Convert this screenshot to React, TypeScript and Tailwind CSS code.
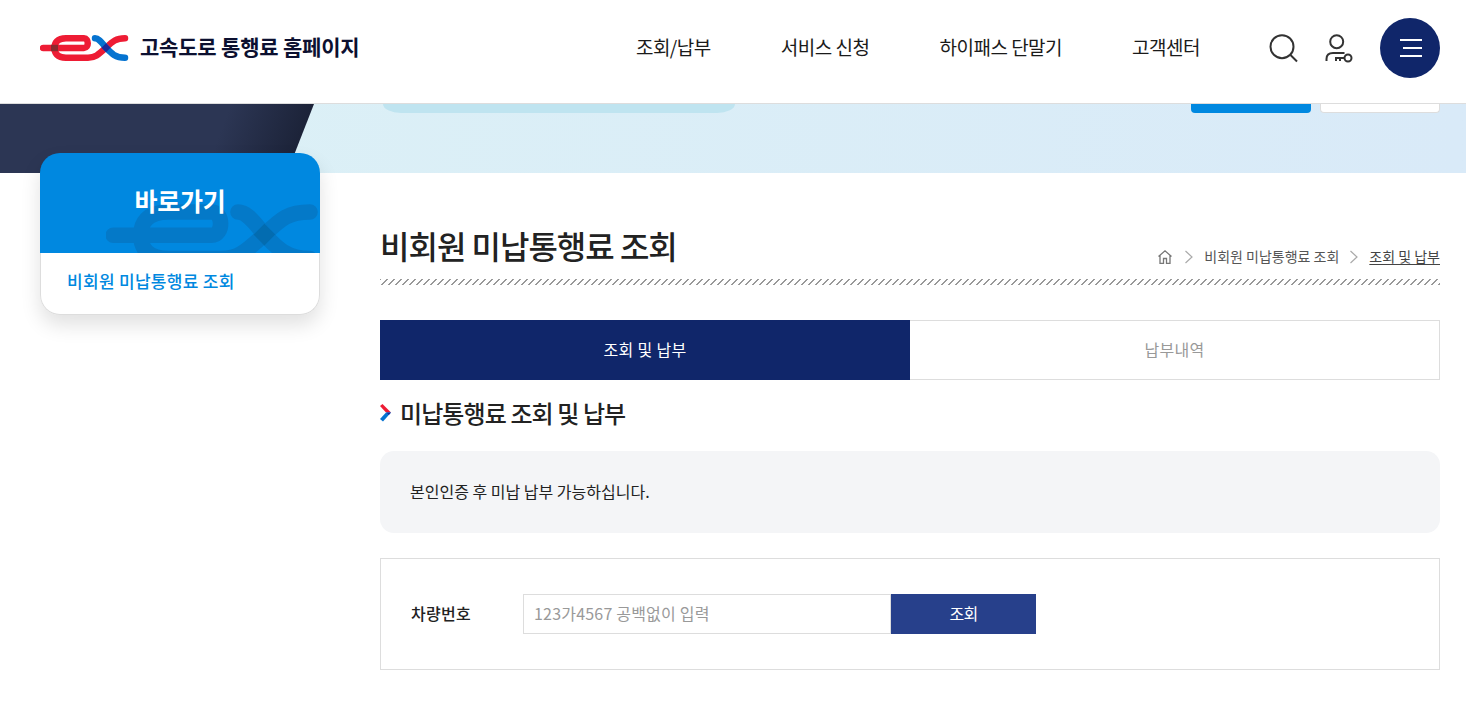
const font = { fontFamily: '"Noto Sans CJK KR", "Noto Sans", sans-serif' };

function ExLogo({ className, mono }: { className?: string; mono?: boolean }) {
  const red = mono ? "#0479c8" : "#ee1c34";
  const blue = mono ? "#0479c8" : "#0573d0";
  return (
    <svg viewBox="0 0 90 27" className={className} fill="none" strokeLinecap="round" strokeWidth="6.5">
      <path d="M3 13H44C49 13 49 3.300 44 3.300H26C17 3.300 14.500 8 14.500 13C14.500 18 17 22.700 26 22.700H48C55 22.700 58 20 66 12.700C73 6 76 3.300 85 3.300" stroke={red} />
      <path d="M55 3.300C59 3.300 62 8 66 12.700C71 18 75 22.700 85 22.700" stroke={blue} />
      <path d="M66 8.200L70.500 12.700L66 17.200L61.500 12.700Z" fill={mono ? "#036cb0" : "#1c2a9a"} />
      {!mono && <path d="M11 9.800H18V16.200H11Z" fill="#8a2a2e" />}
    </svg>
  );
}

function Header() {
  return (
    <header className="h-[104px] bg-white border-b border-[#dddddd] flex items-center pl-10 pr-[26px] pb-[7px]">
      <ExLogo className="w-[90px] h-[27px] mr-[10px]" />
      <span className="text-[21px] font-bold tracking-[-0.2px] text-[#0c1030] -translate-y-px">고속도로 통행료 홈페이지</span>
      <nav className="ml-auto flex items-center gap-[70px] text-[19px] tracking-[-0.5px] text-[#1a1a1a] mr-[69px] -translate-y-px">
        <span>조회/납부</span>
        <span>서비스 신청</span>
        <span>하이패스 단말기</span>
        <span>고객센터</span>
      </nav>
      <svg viewBox="0 0 29 30" className="w-[29px] h-[30px] mr-[27px]" fill="none" stroke="#333333" strokeWidth="2">
        <circle cx="13" cy="13.700" r="11.500" />
        <path d="M21.500 22L28 28.500" />
      </svg>
      <svg viewBox="0 0 28 30" className="w-7 h-[30px] mr-[27px]" fill="none" stroke="#333333" strokeWidth="2">
        <circle cx="11.700" cy="8.700" r="6.500" />
        <path d="M1.500 28V26C1.500 22 4 20 8 20H19.500" />
        <circle cx="23" cy="25" r="3.500" />
        <path d="M19.500 25H11V28M15 25V28" />
      </svg>
      <button className="w-[60px] h-[60px] rounded-full bg-[#10266a] flex flex-col items-end justify-center gap-[6px] pr-[18px]">
        <span className="w-[22px] h-[2px] bg-white" />
        <span className="w-[19px] h-[2px] bg-white" />
        <span className="w-[22px] h-[2px] bg-white" />
      </button>
    </header>
  );
}

function Banner() {
  return (
    <div className="relative h-[69px] bg-gradient-to-r from-[#dcf1f6] to-[#d9eaf8] flex items-start">
      <div className="absolute left-0 top-0 h-full w-[314px] bg-[linear-gradient(110deg,#2c3654_68%,#171d30_100%)] [clip-path:polygon(0_0,100%_0,91.400%_100%,0_100%)]" />
      <div className="ml-[383px] w-[352px] h-[9px] [border-radius:0_0_18px_18px/0_0_9px_9px] bg-[#bfe4f0]" />
      <div className="ml-auto w-[120px] h-[9px] rounded-b-[4px] bg-[#0088e0]" />
      <div className="ml-[9px] mr-[26px] w-[120px] h-[9px] rounded-b-[4px] bg-white border border-t-0 border-[#dddddd]" />
    </div>
  );
}

function Sidebar() {
  return (
    <aside className="relative w-[280px] h-[162px] -mt-5 shrink-0 rounded-[20px] shadow-[0_10px_20px_rgba(0,0,0,0.12)]">
      <div className="relative h-[100px] rounded-t-[20px] bg-[#0088e0] flex items-center justify-center pb-1 overflow-hidden">
        <ExLogo mono className="absolute left-[66px] top-[51px] w-[216px] h-[65px]" />
        <span className="relative text-[25px] font-bold tracking-[-0.25px] text-white">바로가기</span>
      </div>
      <div className="h-[62px] rounded-b-[20px] bg-white border border-t-0 border-[#dddddd] pl-[26px] pt-[15px] text-[17px] font-medium tracking-[0.3px] text-[#0088e0]">
        비회원 미납통행료 조회
      </div>
    </aside>
  );
}

function Breadcrumb() {
  return (
    <div className="flex items-center mb-[12px] text-[14px] text-[#555555]">
      <svg viewBox="0 0 16 16" className="w-4 h-4 mr-[11px]" fill="none" stroke="#777777" strokeWidth="1.300">
        <path d="M1.500 7.500L8 1.800L14.500 7.500M3 6.500V14.300H6.500V9.500H9.500V14.300H13V6.500" />
      </svg>
      <svg viewBox="0 0 10 14" className="w-[10px] h-[14px] mr-[10px]" fill="none" stroke="#aaaaaa" strokeWidth="1.200">
        <path d="M1.500 1L8 7L1.500 13" />
      </svg>
      <span>비회원 미납통행료 조회</span>
      <svg viewBox="0 0 10 14" className="w-[10px] h-[14px] mx-[10px]" fill="none" stroke="#aaaaaa" strokeWidth="1.200">
        <path d="M1.500 1L8 7L1.500 13" />
      </svg>
      <span className="underline underline-offset-2 text-[#444444]">조회 및 납부</span>
    </div>
  );
}

function Main() {
  return (
    <main className="w-[1060px] pt-[49px]">
      <div className="flex items-end justify-between h-[57px]">
        <h1 className="mb-3 text-[32px] leading-[44px] font-medium tracking-[-1px] text-[#222222]">비회원 미납통행료 조회</h1>
        <Breadcrumb />
      </div>
      <div className="h-[6px] bg-[repeating-linear-gradient(135deg,#999999_0,#999999_1px,transparent_1px,transparent_4.9497px)]" />

      <div className="mt-[35px] flex h-[60px] text-[16px] tracking-[0.3px]">
        <div className="w-[530px] bg-[#10266a] text-white flex items-center justify-center pb-[3px]">조회 및 납부</div>
        <div className="flex-1 border border-l-0 border-[#dddddd] text-[#999999] flex items-center justify-center pb-[3px]">납부내역</div>
      </div>

      <div className="mt-[15px] flex items-center h-[36px]">
        <svg viewBox="0 0 11 18" className="w-[11px] h-[18px] mr-[9px]">
          <path d="M0 2L2.500 0L11 8.500H6Z" fill="#ee1c34" />
          <path d="M6 8.500H11L3 17.500L0 15Z" fill="#0573d0" />
          <path d="M6.500 8.500H11L8.800 11Z" fill="#1c2a9a" />
        </svg>
        <h2 className="text-[24px] font-medium tracking-[-0.9px] text-[#222222]">미납통행료 조회 및 납부</h2>
      </div>

      <div className="mt-5 h-[82px] rounded-[14px] bg-[#f4f5f7] flex items-center pl-[30px] pb-[3px] text-[16px] text-[#222222]">
        본인인증 후 미납 납부 가능하십니다.
      </div>

      <div className="mt-[25px] h-[112px] border border-[#dddddd] flex items-center pl-[30px]">
        <label className="w-[112px] pb-[3px] text-[16px] font-medium tracking-[0.3px] text-[#222222]">차량번호</label>
        <input
          readOnly
          placeholder="123가4567 공백없이 입력"
          style={font}
          className="w-[368px] h-10 border border-[#dddddd] px-[10px] pb-[3px] text-[16px] tracking-[0.2px] placeholder:text-[#999999] outline-none"
        />
        <button className="w-[145px] h-10 pb-[3px] bg-[#27408b] text-white text-[16px] tracking-[-0.6px]">조회</button>
      </div>
    </main>
  );
}

export default function App() {
  return (
    <div style={font} className="min-h-[709px] bg-white overflow-hidden">
      <Header />
      <Banner />
      <div className="flex pl-10 pr-[26px] gap-[60px]">
        <Sidebar />
        <Main />
      </div>
    </div>
  );
}
